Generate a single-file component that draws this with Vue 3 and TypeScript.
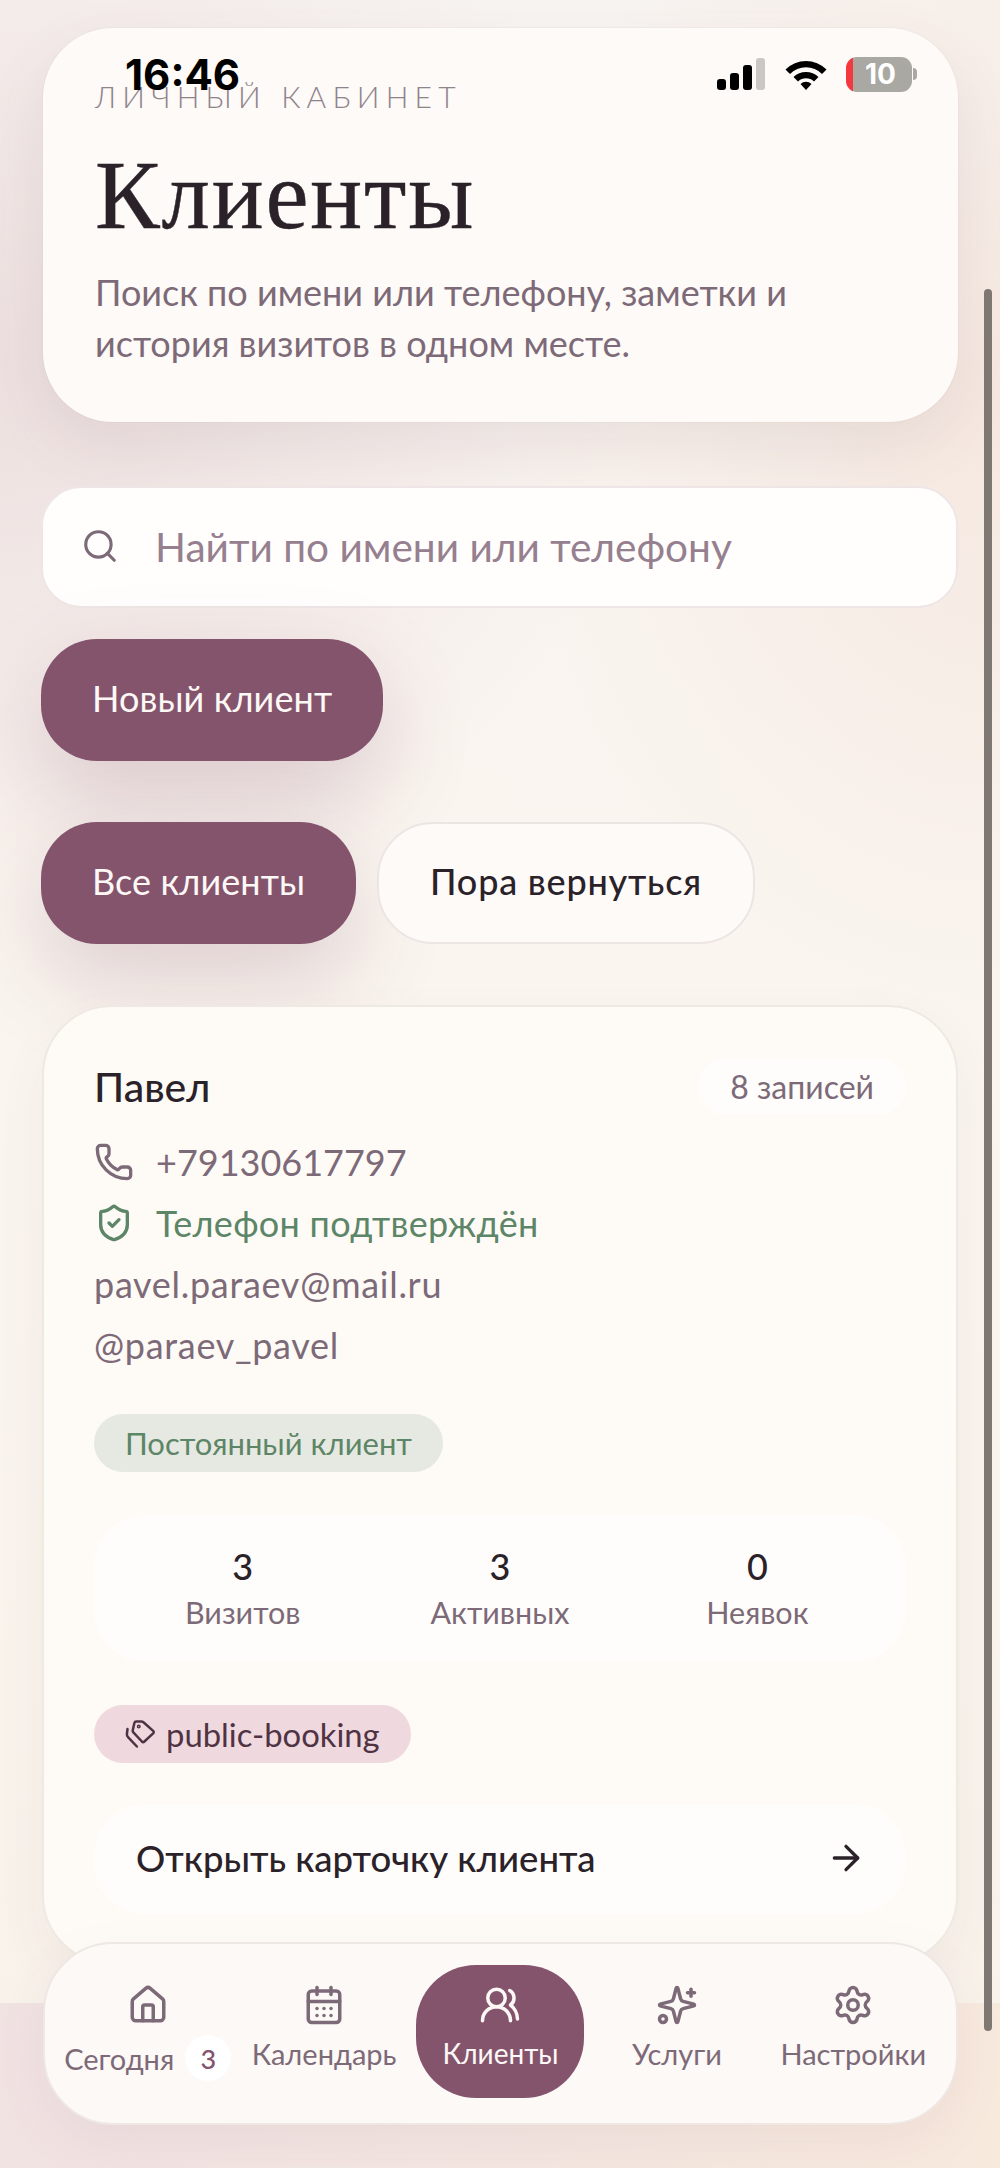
<template>
  <div class="screen">
    <div class="status">
      <span class="time">16:46</span>
      <div class="status-right">
        <div class="signal">
          <i class="b1"></i><i class="b2"></i><i class="b3"></i><i class="b4"></i>
        </div>
        <svg class="wifi" viewBox="0 0 42 32">
          <path d="M0.5 11.5A29 29 0 0 1 41.5 11.5L37 16A22.6 22.6 0 0 0 5 16Z" fill="#000" />
          <path d="M8.5 19A18 18 0 0 1 33.500 19L29 23.500A11.600 11.600 0 0 0 13 23.500Z" fill="#000" />
          <path d="M15.500 26A8 8 0 0 1 26.500 26L21 32Z" fill="#000" />
        </svg>
        <div class="battery"><span>10</span></div>
        <i class="battery-nub"></i>
      </div>
    </div>

    <main class="page">
      <section class="hero">
        <p class="eyebrow">ЛИЧНЫЙ КАБИНЕТ</p>
        <h1>Клиенты</h1>
        <p class="lead">Поиск по имени или телефону, заметки и история визитов в одном месте.</p>
      </section>

      <div class="search">
        <svg class="ico search-ico" viewBox="0 0 24 24"><circle cx="11" cy="11" r="8" /><path d="m21 21-4.340-4.340" /></svg>
        <span>Найти по имени или телефону</span>
      </div>

      <button class="btn primary new-client">Новый клиент</button>

      <div class="filters">
        <button class="btn primary">Все клиенты</button>
        <button class="btn ghost">Пора вернуться</button>
      </div>

      <article class="card">
        <div class="card-head">
          <span class="name">{{ client.name }}</span>
          <span class="count">{{ client.records }}</span>
        </div>
        <div class="row phone">
          <svg class="ico row-ico" viewBox="0 0 24 24"><path d="M13.832 16.568a1 1 0 0 0 1.213-.303l.355-.465A2 2 0 0 1 17 15h3a2 2 0 0 1 2 2v3a2 2 0 0 1-2 2A18 18 0 0 1 2 4a2 2 0 0 1 2-2h3a2 2 0 0 1 2 2v3a2 2 0 0 1-.8 1.600l-.468.351a1 1 0 0 0-.292 1.233 14 14 0 0 0 6.392 6.384" /></svg>
          {{ client.phone }}
        </div>
        <div class="row ok">
          <svg class="ico row-ico" viewBox="0 0 24 24"><path d="M20 13c0 5-3.500 7.500-7.660 8.950a1 1 0 0 1-.670-.010C7.500 20.500 4 18 4 13V6a1 1 0 0 1 1-1c2 0 4.500-1.200 6.240-2.720a1.170 1.170 0 0 1 1.520 0C14.510 3.810 17 5 19 5a1 1 0 0 1 1 1z" /><path d="m9 12 2 2 4-4" /></svg>
          Телефон подтверждён
        </div>
        <div class="row contact">{{ client.email }}</div>
        <div class="row contact">{{ client.handle }}</div>

        <span class="tag tag-green">Постоянный клиент</span>

        <div class="stats">
          <div v-for="s in client.stats" :key="s.label" class="stat">
            <b>{{ s.value }}</b>
            <span>{{ s.label }}</span>
          </div>
        </div>

        <span class="tag tag-pink">
          <svg class="ico tag-ico" viewBox="0 0 24 24">
            <path d="M9 2L13 2Q14 2 15 2.800L22.500 9.500Q23.500 10.500 22.500 11.500L15.500 18Q14.500 19 13.500 18L6.500 10.500Q6 10 6.200 9L7.500 3.200Q7.800 2 9 2Z" />
            <path d="M2 8L1.500 12Q1.400 13.500 2.400 14.500L9.500 22" />
            <circle cx="11" cy="6" r=".6" />
          </svg>
          public-booking
        </span>

        <div class="open">
          <span>Открыть карточку клиента</span>
          <svg class="ico arrow" viewBox="0 0 24 24"><path d="M5 12h14" /><path d="m12 5 7 7-7 7" /></svg>
        </div>
      </article>
    </main>

    <i class="scrollbar"></i>

    <nav class="tabbar">
      <div v-for="t in tabs" :key="t.label" class="tab" :class="{ active: t.active }">
        <svg class="ico tab-ico" viewBox="0 0 24 24" v-html="t.icon"></svg>
        <div class="tab-label" :class="{ 'with-badge': t.badge }">
          <span>{{ t.label }}</span>
          <em v-if="t.badge">{{ t.badge }}</em>
        </div>
      </div>
    </nav>
  </div>
</template>

<script setup lang="ts">
interface Tab {
  label: string
  icon: string
  active?: boolean
  badge?: number
}

const client = {
  name: 'Павел',
  records: '8 записей',
  phone: '+79130617797',
  email: 'pavel.paraev@mail.ru',
  handle: '@paraev_pavel',
  stats: [
    { value: 3, label: 'Визитов' },
    { value: 3, label: 'Активных' },
    { value: 0, label: 'Неявок' }
  ]
}

const tabs: Tab[] = [
  {
    label: 'Сегодня',
    badge: 3,
    icon: '<path d="M15 21v-8a1 1 0 0 0-1-1h-4a1 1 0 0 0-1 1v8"/><path d="M3 10a2 2 0 0 1 .709-1.528l7-5.999a2 2 0 0 1 2.582 0l7 5.999A2 2 0 0 1 21 10v9a2 2 0 0 1-2 2H5a2 2 0 0 1-2-2z"/>'
  },
  {
    label: 'Календарь',
    icon: '<path d="M8 2v4"/><path d="M16 2v4"/><rect width="18" height="18" x="3" y="4" rx="2"/><path d="M3 10h18"/><path d="M8 14h.01"/><path d="M12 14h.01"/><path d="M16 14h.01"/><path d="M8 18h.01"/><path d="M12 18h.01"/><path d="M16 18h.01"/>'
  },
  {
    label: 'Клиенты',
    active: true,
    icon: '<path d="M18 21a8 8 0 0 0-16 0"/><circle cx="10" cy="8" r="5"/><path d="M22 20c0-3.370-2-6.500-4-8a5 5 0 0 0-.450-8.300"/>'
  },
  {
    label: 'Услуги',
    icon: '<path d="M9.937 15.500A2 2 0 0 0 8.500 14.063l-6.135-1.582a.5.5 0 0 1 0-.962L8.500 9.936A2 2 0 0 0 9.937 8.500l1.582-6.135a.5.5 0 0 1 .963 0L14.063 8.500A2 2 0 0 0 15.500 9.937l6.135 1.581a.5.5 0 0 1 0 .964L15.500 14.063a2 2 0 0 0-1.437 1.437l-1.582 6.135a.5.5 0 0 1-.963 0z"/><path d="M20 3v4"/><path d="M22 5h-4"/><circle cx="4" cy="20" r="2"/>'
  },
  {
    label: 'Настройки',
    icon: '<path d="M9.671 4.136a2.340 2.340 0 0 1 4.659 0 2.340 2.340 0 0 0 3.319 1.915 2.340 2.340 0 0 1 2.330 4.033 2.340 2.340 0 0 0 0 3.831 2.340 2.340 0 0 1-2.330 4.033 2.340 2.340 0 0 0-3.319 1.915 2.340 2.340 0 0 1-4.659 0 2.340 2.340 0 0 0-3.320-1.915 2.340 2.340 0 0 1-2.330-4.033 2.340 2.340 0 0 0 0-3.831A2.340 2.340 0 0 1 6.350 6.051a2.340 2.340 0 0 0 3.319-1.915"/><circle cx="12" cy="12" r="3"/>'
  }
]
</script>

<style scoped>
.screen {
  position: relative;
  height: 2168px;
  overflow: hidden;
  font-family: 'Lato', 'Noto Sans', sans-serif;
  color: #2b2229;
  background: linear-gradient(100deg, #efdfe3 0%, #f3e5e2 50%, #f8e9dd 100%);
}

.page {
  height: 2003px;
  box-sizing: border-box;
  padding: 28px 42px 0;
  background:
    radial-gradient(900px 800px at 0% 18%, rgba(236, 222, 222, 0.95), transparent 72%),
    radial-gradient(700px 900px at 100% 20%, rgba(245, 231, 223, 0.95), transparent 70%),
    linear-gradient(180deg, #f8f4f1 0%, #faf5ef 50%, #f8f2ea 100%);
}

/* status bar lies over the page */
.status {
  position: absolute;
  top: 0;
  left: 0;
  right: 0;
  height: 110px;
  z-index: 3;
}
.time {
  position: absolute;
  left: 125px;
  top: 50px;
  font: 700 42px/50px 'Inter', sans-serif;
  color: #000;
}
.status-right {
  position: absolute;
  left: 717px;
  top: 57px;
  display: flex;
  align-items: center;
  height: 34px;
}
.signal {
  display: flex;
  align-items: flex-end;
  gap: 4px;
  height: 32px;
}
.signal i {
  display: block;
  width: 9px;
  border-radius: 3px;
  background: #000;
}
.b1 { height: 11px; }
.b2 { height: 17px; }
.b3 { height: 25px; }
.signal .b4 { height: 32px; background: #c9c8c5; }
.wifi {
  width: 42px;
  height: 32px;
  margin-left: 20px;
}
.battery {
  box-sizing: border-box;
  width: 66px;
  height: 35px;
  margin-left: 19px;
  border-radius: 11px;
  overflow: hidden;
  background: linear-gradient(90deg, #f5383f 0 7px, #a9a8a3 7px);
  display: flex;
  align-items: center;
  justify-content: center;
  padding-left: 3px;
  color: #fff;
  font: 700 28px/35px 'Inter', sans-serif;
}
.battery-nub {
  width: 4px;
  height: 12px;
  margin-left: 1px;
  border-radius: 0 4px 4px 0;
  background: #a9a8a3;
}

.hero {
  box-sizing: border-box;
  height: 394px;
  margin-left: 1px;
  padding: 50px 52px 0;
  border-radius: 70px;
  background: #fdfaf7;
  box-shadow: 0 24px 60px rgba(110, 76, 92, 0.1), 0 0 0 1px rgba(132, 84, 109, 0.03);
}
.eyebrow {
  margin: 0;
  font-size: 30px;
  line-height: 36px;
  font-weight: 300;
  letter-spacing: 6.2px;
  color: #8f838c;
}
h1 {
  margin: 32px 0 0;
  font: 400 97px/100px 'Liberation Serif', serif;
  letter-spacing: 1.8px;
  -webkit-text-stroke: 0.4px #2b2229;
  color: #2b2229;
}
.lead {
  margin: 21px 0 0;
  width: 720px;
  font-size: 36px;
  line-height: 51px;
  font-weight: 400;
  color: #7d6a78;
}

.search {
  box-sizing: border-box;
  height: 122px;
  margin: 64px 0 0 -1px;
  padding: 0 38px 2px;
  display: flex;
  align-items: center;
  gap: 36px;
  border-radius: 40px;
  background: #fffefd;
  border: 2px solid #eee6e6;
  font-size: 40.6px;
  color: #96808f;
}
.ico {
  fill: none;
  stroke: currentColor;
  stroke-width: 2;
  stroke-linecap: round;
  stroke-linejoin: round;
  flex: none;
}
.search-ico {
  width: 38px;
  height: 38px;
  color: #7d6a78;
}

.btn {
  box-sizing: border-box;
  display: block;
  height: 122px;
  margin-left: -1px;
  border: 0;
  border-radius: 56px;
  font-family: inherit;
  font-size: 36px;
  font-weight: 400;
  letter-spacing: 0.1px;
  padding: 0 51px 4px;
}
.primary {
  background: #84546d;
  color: #fdf8f5;
  box-shadow: 0 36px 90px rgba(132, 84, 109, 0.24);
}
.ghost {
  margin-left: 0;
  background: #fdfaf8;
  color: #2b2229;
  border: 2px solid #ece5e4;
  font-weight: 500;
  letter-spacing: 0.8px;
}
.new-client {
  margin-top: 31px;
}
.filters {
  display: flex;
  gap: 21px;
  margin-top: 61px;
}

.card {
  box-sizing: border-box;
  height: 960px;
  margin: 61px 0 0;
  padding: 51px 50px 50px;
  border-radius: 70px;
  background: #fefbf6;
  border: 2px solid #efe9e4;
  box-shadow: 0 20px 50px rgba(132, 84, 109, 0.06);
  position: relative;
}
.card-head {
  display: flex;
  justify-content: space-between;
  align-items: center;
  height: 57px;
  margin-bottom: 16px;
}
.name {
  font-size: 41px;
  font-weight: 500;
}
.count {
  padding: 0 32px;
  height: 57px;
  display: flex;
  align-items: center;
  border-radius: 29px;
  background: #fffdfb;
  font-size: 32px;
  color: #7d6a78;
}
.row {
  display: flex;
  align-items: center;
  gap: 22px;
  height: 61px;
  font-size: 36px;
  letter-spacing: 0.3px;
  color: #7d6a78;
}
.row.phone {
  letter-spacing: 0;
}
.row.contact {
  letter-spacing: 0.7px;
}
.row.ok {
  color: #5d8567;
}
.row-ico {
  width: 40px;
  height: 40px;
}
.tag {
  display: inline-flex;
  align-items: center;
  box-sizing: border-box;
  height: 58px;
  padding: 0 31px;
  border-radius: 29px;
  font-size: 31px;
}
.tag-green {
  margin-top: 39px;
  background: #e6e9e1;
  color: #5d8567;
}
.tag-pink {
  background: #f0d8df;
  color: #4f3343;
  font-size: 32.800px;
  gap: 11px;
}
.tag-ico {
  width: 30px;
  height: 30px;
}
.stats {
  display: grid;
  grid-template-columns: repeat(3, 1fr);
  height: 147px;
  margin: 43px 0 43px;
  padding: 0 20px;
  border-radius: 52px;
  background: #fffdfb;
  align-content: center;
}
.stat {
  display: flex;
  flex-direction: column;
  align-items: center;
}
.stat b {
  font-size: 36px;
  line-height: 46px;
  font-weight: 500;
}
.stat span {
  font-size: 30.5px;
  line-height: 46px;
  color: #7d6a78;
}
.open {
  display: flex;
  justify-content: space-between;
  align-items: center;
  box-sizing: border-box;
  height: 110px;
  margin-top: 41px;
  padding: 0 40px 3px 42px;
  border-radius: 52px;
  background: #fffdfb;
  font-size: 36.500px;
  font-weight: 500;
}
.arrow {
  width: 40px;
  height: 40px;
}

/* overlay scrollbar */
.scrollbar {
  position: absolute;
  left: 984px;
  top: 289px;
  width: 8px;
  height: 1742px;
  border-radius: 4px;
  background: #7e7772;
  z-index: 2;
}

/* tab bar stays over the scrolled content */
.tabbar {
  position: absolute;
  left: 43px;
  top: 1942px;
  width: 915px;
  height: 183px;
  box-sizing: border-box;
  padding: 21px 14.500px 0;
  display: grid;
  grid-template-columns: repeat(5, 1fr);
  border-radius: 70px;
  background: #fdf9f6;
  border: 2px solid #eee7e3;
  box-shadow: 0 18px 50px rgba(132, 84, 109, 0.08);
  z-index: 1;
}
.tab {
  height: 133px;
  display: flex;
  flex-direction: column;
  align-items: center;
  padding-top: 19px;
  box-sizing: border-box;
  color: #7d6a78;
  font-size: 29px;
}
.tab.active {
  justify-self: center;
  width: 168px;
  border-radius: 60px;
  background: #84546d;
  color: #fdf8f5;
  font-size: 28px;
}
.tab-ico {
  width: 42px;
  height: 42px;
}
.tab-label {
  display: flex;
  align-items: center;
  gap: 11px;
  height: 46px;
  margin-top: 4px;
  white-space: nowrap;
}
.tab-label.with-badge {
  margin-top: 9px;
}
.tab-label em {
  width: 46px;
  height: 46px;
  border-radius: 50%;
  background: #fff;
  color: #84546d;
  font-style: normal;
  font-size: 27px;
  font-weight: 500;
  display: flex;
  align-items: center;
  justify-content: center;
}
</style>

<style>
html,
body {
  margin: 0;
  background: #f8f2ea;
}
</style>
